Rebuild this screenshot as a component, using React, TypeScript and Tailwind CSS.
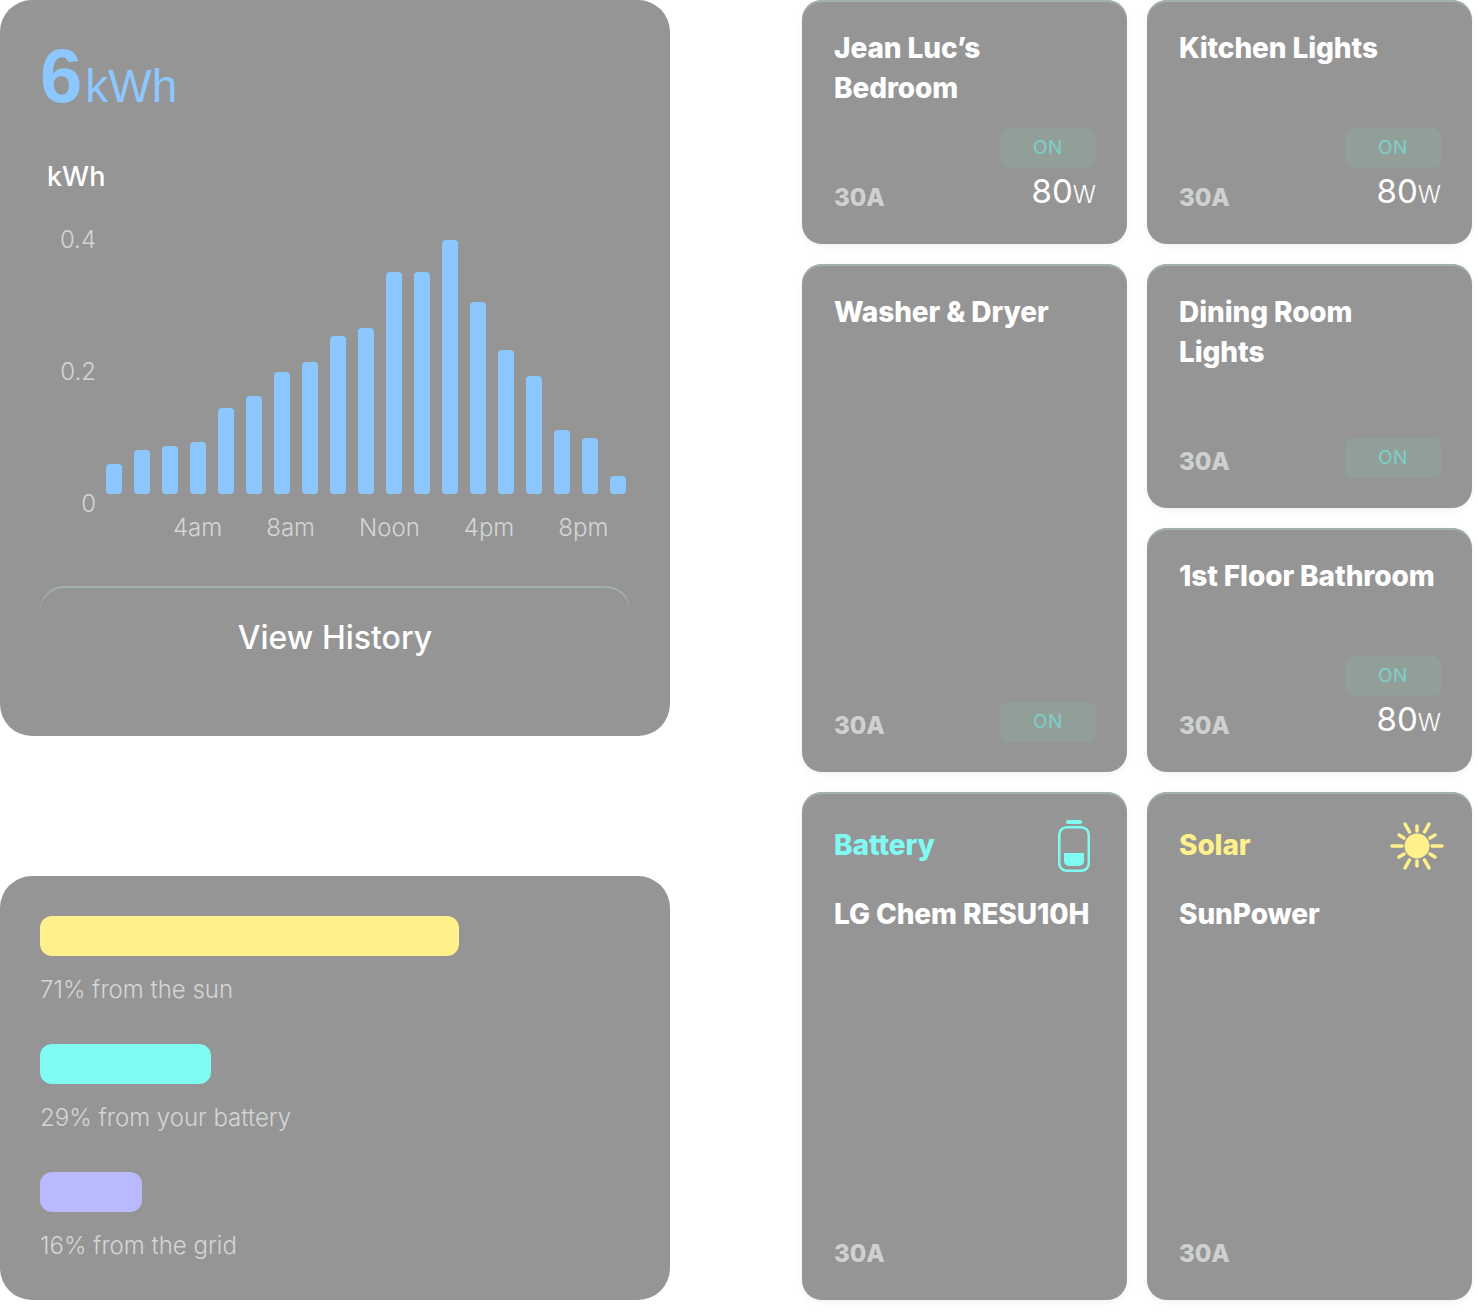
const barHeights = [30, 44, 48, 52, 86, 98, 122, 132, 158, 166, 222, 222, 254, 192, 144, 118, 64, 56, 18];
const hours = ['4am', '8am', 'Noon', '4pm', '8pm'];

const sources = [
  { label: '71% from the sun', bar: 'w-[419px] bg-[#fff08c]' },
  { label: '29% from your battery', bar: 'w-[171px] bg-[#80fbf3]' },
  { label: '16% from the grid', bar: 'w-[102px] bg-[#b9b9ff]' },
];

const BatteryIcon = () => (
  <svg width="32" height="52" viewBox="0 0 32 52" fill="none" className="mr-[6px]">
    <rect x="8" y="0" width="16" height="4" rx="2" fill="#80fbf3" />
    <rect x="1.25" y="7.25" width="29.5" height="43.5" rx="7.5" stroke="#80fbf3" strokeWidth="2.5" />
    <path d="M6 33h20v8a5 5 0 0 1-5 5H11a5 5 0 0 1-5-5z" fill="#80fbf3" />
  </svg>
);

const SunIcon = () => (
  <svg width="54" height="50" viewBox="0 0 54 50" fill="none" stroke="#fff08c" strokeLinecap="round" strokeWidth="3.5" className="-mr-[3px]">
    <circle cx="27" cy="25" r="12.500" fill="#fff08c" stroke="none" />
    <path d="M2 25h10M42 25h10M27 5v5M27 40v5M15 3l4.500 8M39 3l-4.500 8M15 47l4.500-8M39 47l-4.500-8" />
    <path d="M9 14l5 3M45 14l-5 3M9 36l5-3M45 36l-5-3" />
  </svg>
);

const Title = ({ children, className = '' }: { children: React.ReactNode; className?: string }) => (
  <h3 className={`text-[28px] leading-[40px] font-extrabold tracking-[-0.1px] text-white ${className}`}>{children}</h3>
);

const Amps = () => <span className="block text-[24px] leading-[32px] font-extrabold text-[#cfd1d0]">30A</span>;

const Badge = () => (
  <div className="flex h-10 w-24 items-center justify-center rounded-lg bg-[#929f99] text-[19px] font-normal tracking-[0.5px] text-[#7ccfca]">
    ON
  </div>
);

const Watts = () => (
  <div className="h-[46px] leading-[46px] text-white">
    <span className="text-[33px] font-normal">80</span>
    <span className="text-[24px] font-light">W</span>
  </div>
);

const Circuit = ({ title, watts, className = '' }: { title: React.ReactNode; watts?: boolean; className?: string }) => (
  <div className={`flex flex-col justify-between rounded-[20px] bg-[#959595] pt-7 pr-[31px] pb-[30px] pl-8 shadow-[inset_0_2px_0_#a3b1ab,0_2px_6px_rgba(0,0,0,0.06)] ${className}`}>
    <Title>{title}</Title>
    <div className="flex items-end justify-between">
      <Amps />
      <div className="flex flex-col items-end">
        <Badge />
        {watts && <Watts />}
      </div>
    </div>
  </div>
);

const Source = ({ heading, color, icon, name }: { heading: string; color: string; icon: React.ReactNode; name: string }) => (
  <div className="flex flex-col rounded-[20px] bg-[#959595] pt-7 pr-[31px] pb-[30px] pl-8 shadow-[inset_0_2px_0_#a3b1ab,0_2px_6px_rgba(0,0,0,0.06)]">
    <div className="flex h-[52px] items-center justify-between">
      <span className={`-mt-[2px] text-[28px] font-extrabold tracking-[-0.1px] ${color}`}>{heading}</span>
      {icon}
    </div>
    <Title className="mt-[22px] whitespace-nowrap">{name}</Title>
    <div className="mt-auto">
      <Amps />
    </div>
  </div>
);

export default function App() {
  return (
    <div className="flex h-[1312px] w-[1478px] gap-[132px] bg-white font-['Inter',sans-serif]">
      <div className="flex w-[670px] flex-col gap-[140px]">
        <section className="h-[736px] rounded-[32px] bg-[#959595] px-10 pt-10">
          <div className="flex h-[72px] items-baseline font-['Liberation_Sans',sans-serif] text-[#8cc8ff]">
            <span className="text-[76px] leading-[72px] font-bold">6</span>
            <span className="ml-[3px] text-[46px] leading-[72px]">kWh</span>
          </div>
          <div className="mt-[47px] pl-[7px] text-[27px] leading-9 font-medium text-white">kWh</div>
          <div className="mt-[31px] flex">
            <div className="flex h-[292px] w-14 flex-col items-end justify-between text-[24px] leading-7 font-light text-[#d4d6d5]">
              <span>0.4</span>
              <span>0.2</span>
              <span>0</span>
            </div>
            <div className="ml-[10px]">
              <div className="flex h-[268px] items-end gap-3">
                {barHeights.map((h, i) => (
                  <div key={i} className="w-4 rounded-[4px] bg-[#8cc8ff]" style={{ height: h }} />
                ))}
              </div>
              <div className="mt-5 flex gap-11 pl-[67px] text-[24px] leading-7 font-light text-[#d4d6d5]">
                {hours.map((h) => (
                  <span key={h}>{h}</span>
                ))}
              </div>
            </div>
          </div>
          <button className="mt-[44px] h-[102px] w-full rounded-[24px] pt-[2px] text-[32px] font-medium text-white shadow-[inset_0_2px_0_#a3b1ab]">
            View History
          </button>
        </section>
        <section className="flex h-[424px] flex-col gap-[38px] rounded-[32px] bg-[#959595] p-10">
          {sources.map((s) => (
            <div key={s.label}>
              <div className={`h-10 rounded-xl ${s.bar}`} />
              <p className="mt-[18px] text-[24px] leading-8 font-light text-[#d4d6d5]">{s.label}</p>
            </div>
          ))}
        </section>
      </div>
      <div className="grid h-[1300px] grid-cols-[325px_325px] grid-rows-[244px_244px_244px_508px] gap-5">
        <Circuit title={<>Jean Luc’s<br />Bedroom</>} watts />
        <Circuit title="Kitchen Lights" watts />
        <Circuit title="Washer & Dryer" className="row-span-2" />
        <Circuit title={<>Dining Room<br />Lights</>} />
        <Circuit title="1st Floor Bathroom" watts />
        <Source heading="Battery" color="text-[#80fbf3]" icon={<BatteryIcon />} name="LG Chem RESU10H" />
        <Source heading="Solar" color="text-[#fff08c]" icon={<SunIcon />} name="SunPower" />
      </div>
    </div>
  );
}
